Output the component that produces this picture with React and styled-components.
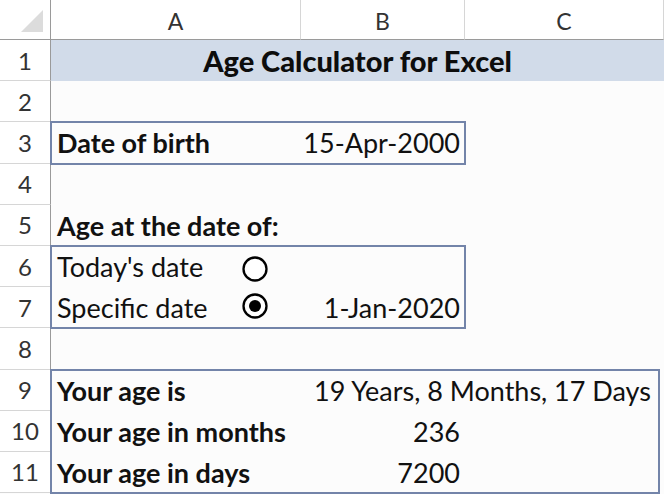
import React from 'react'
import styled, { createGlobalStyle } from 'styled-components'

const Global = createGlobalStyle`
  html, body { margin: 0; padding: 0; background: #fff; }
  body { font-family: Lato, "Open Sans", sans-serif; }
`

const Sheet = styled.div`
  display: grid;
  grid-template-columns: 51px 250px 164px 199px;
  grid-template-rows: 40px repeat(11, 41.2px);
  width: 664px;
  height: 494px;
  overflow: hidden;
  background: #fcfcfc;
  color: #111;
`

const Corner = styled.div`
  grid-row: 1;
  grid-column: 1;
  background: #fff;
  border-right: 1px solid #9a9a9a;
  border-bottom: 1px solid #9a9a9a;
  display: flex;
  align-items: flex-end;
  justify-content: flex-end;
  padding: 0 7px 7px 0;
`

const Triangle = styled.div`
  width: 0;
  height: 0;
  border-left: 22px solid transparent;
  border-bottom: 22px solid #dcdcdc;
`

const ColHead = styled.div`
  grid-row: 1;
  grid-column: ${p => p.col};
  background: #fff;
  border-right: 1px solid #d6d6d6;
  border-bottom: 1px solid #9a9a9a;
  display: flex;
  align-items: center;
  justify-content: center;
  font-size: 23px;
  color: #333;
  padding-top: 2px;
`

const RowHead = styled.div`
  grid-row: ${p => p.row + 1};
  grid-column: 1;
  background: #fff;
  border-right: 1px solid #9a9a9a;
  border-bottom: 1px solid #d6d6d6;
  display: flex;
  align-items: center;
  justify-content: center;
  font-size: 24px;
  color: #333;
`

const TitleBand = styled.div`
  grid-row: 2;
  grid-column: 2 / 5;
  background: #d1dbe9;
  display: flex;
  align-items: center;
  justify-content: center;
  font-weight: 900;
  font-size: 29px;
  color: #0d0d0d;
`

const Cell = styled.div`
  grid-row: ${p => p.row + 1};
  grid-column: ${p => p.col};
  display: flex;
  align-items: center;
  justify-content: ${p => (p.align === 'right' ? 'flex-end' : p.align === 'center' ? 'center' : 'flex-start')};
  padding: 0 ${p => (p.align === 'right' ? '5px' : '0')} 0 ${p => (p.align === 'left' || !p.align ? '6px' : '0')};
  font-size: 27px;
  font-weight: ${p => (p.bold ? 700 : 400)};
  white-space: nowrap;
  z-index: 1;
`

const RadioCell = styled.div`
  grid-row: ${p => p.row + 1};
  grid-column: 2;
  display: flex;
  align-items: ${p => (p.up ? 'flex-start' : 'center')};
  padding: ${p => (p.up ? '5px' : '4px')} 0 0 190px;
  z-index: 1;
`

const Frame = styled.div`
  grid-row: ${p => p.rows};
  grid-column: ${p => p.cols};
  border: 2px solid #7384a9;
  margin: -1px ${p => (p.inset ? '4px' : '-1px')} -1px -1px;
  z-index: 2;
  pointer-events: none;
`

const Radio = ({ checked }) => (
  <svg width="28" height="28" viewBox="0 0 28 28">
    <circle cx="14" cy="14" r="11.5" fill="#fff" stroke="#000" strokeWidth="2.3" />
    {checked && <circle cx="14" cy="14" r="6" fill="#000" />}
  </svg>
)

export default function App() {
  const rows = Array.from({ length: 11 }, (_, i) => i + 1)
  return (
    <>
      <Global />
      <Sheet>
        <Corner><Triangle /></Corner>
        <ColHead col={2}>A</ColHead>
        <ColHead col={3}>B</ColHead>
        <ColHead col={4}>C</ColHead>
        {rows.map(r => <RowHead key={r} row={r}>{r}</RowHead>)}

        <TitleBand>Age Calculator for Excel</TitleBand>

        <Cell row={3} col={2} bold>Date of birth</Cell>
        <Cell row={3} col={3} align="right">15-Apr-2000</Cell>

        <Cell row={5} col={2} bold>Age at the date of:</Cell>
        <Cell row={6} col={2}>Today's date</Cell>
        <RadioCell row={6}><Radio /></RadioCell>
        <Cell row={7} col={2}>Specific date</Cell>
        <RadioCell row={7} up><Radio checked /></RadioCell>
        <Cell row={7} col={3} align="right">1-Jan-2020</Cell>

        <Cell row={9} col={2} bold>Your age is</Cell>
        <Cell row={9} col="3 / 5" align="center">19 Years, 8 Months, 17 Days</Cell>
        <Cell row={10} col={2} bold>Your age in months</Cell>
        <Cell row={10} col={3} align="right">236</Cell>
        <Cell row={11} col={2} bold>Your age in days</Cell>
        <Cell row={11} col={3} align="right">7200</Cell>

        <Frame rows="4" cols="2 / 4" />
        <Frame rows="7 / 9" cols="2 / 4" />
        <Frame rows="10 / 13" cols="2 / 5" inset />
      </Sheet>
    </>
  )
}
